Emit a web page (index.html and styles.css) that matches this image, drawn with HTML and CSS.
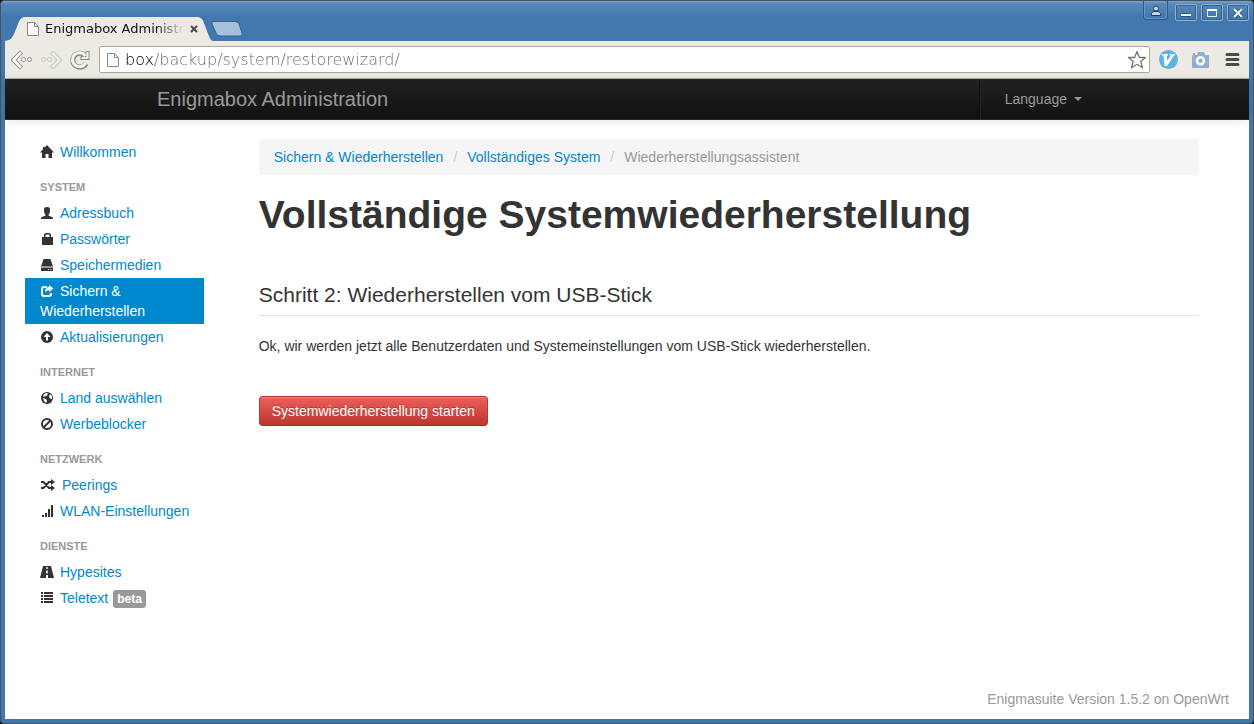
FILE: index.html
```html
<!DOCTYPE html>
<html lang="de">
<head>
<meta charset="utf-8">
<title>Enigmabox Administration</title>
<link rel="stylesheet" href="styles.css">
</head>
<body>
<div class="window">
  <header class="titlebar">
    <div class="tab">
      <svg class="tab-shape" viewBox="0 0 210 25" preserveAspectRatio="none" aria-hidden="true"><path d="M0 25C6 24 7 22 9 18L14 5Q16 0 20 0H194Q198 0 200 4L206 20Q208 25 210 25Z"/></svg>
      <svg class="page-icon" viewBox="0 0 12 14" aria-hidden="true"><path d="M.5.5h7l4 4v9H.5zM7.500.500v4h4"/></svg>
      <span class="tab-title">Enigmabox Administr</span>
      <button class="tab-close" aria-label="Tab schließen"><svg width="8" height="8" viewBox="0 0 8 8"><path d="M1 1l6 6M7 1L1 7" stroke="#4a4a4a" stroke-width="2"/></svg></button>
    </div>
    <button class="new-tab" aria-label="Neuer Tab"><svg width="32" height="16" viewBox="0 0 32 16"><path d="M3 .5H24Q27 .5 28 3L31 12Q32 15 29 15H9Q6 15 5 12L1 3Q0 .5 3 .5Z" fill="#a3c0dc" stroke="#37618d"/></svg></button>
    <div class="win-buttons">
      <button class="win-btn user" aria-label="Benutzer"><svg width="12" height="12" viewBox="0 0 12 12"><circle cx="6" cy="3.500" r="2.500" fill="#c5d8ea" stroke="#213c59"/><path d="M1.500 10.500V8.500Q2 7 4 6.500H8Q10 7 10.500 8.500V10.500Z" fill="#c5d8ea" stroke="#213c59"/></svg></button>
      <button class="win-btn" aria-label="Minimieren"><svg width="12" height="12" viewBox="0 0 12 12"><path d="M1 8h10" stroke="#2b5680" stroke-width="4"/><path d="M1 8h10" stroke="#fff" stroke-width="2"/></svg></button>
      <button class="win-btn" aria-label="Maximieren"><svg width="12" height="12" viewBox="0 0 12 12"><path d="M1.500 2.500h9v7h-9z" fill="none" stroke="#e9f1f8"/><path d="M1 3h10" stroke="#fff" stroke-width="2"/></svg></button>
      <button class="win-btn" aria-label="Schließen"><svg width="12" height="12" viewBox="0 0 12 12"><path d="M2 2l8 8M10 2L2 10" stroke="#2b5680" stroke-width="3.500"/><path d="M2 2l8 8M10 2L2 10" stroke="#fff" stroke-width="1.800"/></svg></button>
    </div>
  </header>

  <div class="toolbar">
    <button class="tool back" aria-label="Zurück"><svg width="22" height="22" viewBox="0 0 22 22"><path d="M10.500 3L2.500 11l8 8" fill="none" stroke="#8b8b88" stroke-width="4.500"/><path d="M10 3.500L2.500 11l7.500 7.500" fill="none" stroke="#fafaf8" stroke-width="2.500"/><g fill="#fff" stroke="#8b8b88"><circle cx="12.500" cy="10.500" r="2"/><circle cx="18.500" cy="10.500" r="2"/></g></svg></button>
    <button class="tool forward" aria-label="Vor"><svg width="22" height="22" viewBox="0 0 22 22"><path d="M11.500 3l8 8-8 8" fill="none" stroke="#c5c3be" stroke-width="4.500"/><path d="M12 3.500l7.500 7.500-7.500 7.500" fill="none" stroke="#efede7" stroke-width="2.500"/><g fill="#f1efea" stroke="#c5c3be"><circle cx="3.500" cy="10.500" r="2"/><circle cx="9.500" cy="10.500" r="2"/></g></svg></button>
    <button class="tool reload" aria-label="Neu laden"><svg width="22" height="22" viewBox="0 0 22 22"><g fill="none" stroke="#8b8b88" stroke-width="5"><path d="M16 6.500A7 7 0 1 0 17 14.500"/><path d="M18.500 2v7H11.500" stroke-width="4"/></g><g fill="none" stroke="#f5f5f2" stroke-width="3"><path d="M16.500 7A7 7 0 1 0 16.700 14"/><path d="M18.500 3v6H12.500" stroke-width="2"/></g></svg></button>
    <div class="address">
      <svg class="page-icon" viewBox="0 0 12 14" aria-hidden="true"><path d="M.5.5h7l4 4v9H.5zM7.500.500v4h4"/></svg>
      <input class="url" type="text" aria-label="Adresse" value="box/backup/system/restorewizard/">
      <button class="tool" aria-label="Lesezeichen"><svg width="20" height="20" viewBox="0 0 20 20"><path d="M10 1.500l2.400 6H18.500l-4.700 4 1.700 6.300L10 14.300l-5.500 3.500 1.700-6.300-4.700-4H7.600z" fill="#fff" stroke="#777" stroke-width="1.300" stroke-linejoin="round"/></svg></button>
    </div>
    <button class="tool" aria-label="Vimium"><svg width="20" height="20" viewBox="0 0 20 20"><circle cx="10.500" cy="9.500" r="9.500" fill="#5fb0e4"/><path d="M4 4H10V5.500H9V11L13 5.500H12V4H17V5.500H16L9 16H6.500L5.500 5.500H4z" fill="#fff"/></svg></button>
    <button class="tool" aria-label="Bildschirmfoto"><svg width="20" height="20" viewBox="0 0 20 20"><path d="M3 5V3h2v2h2L8 2h6l1 3h3q1 0 1 1v11q0 1-1 1H3q-1 0-1-1V6q0-1 1-1z" fill="#91afd3"/><circle cx="10.500" cy="10.800" r="3.500" fill="#91afd3" stroke="#fff" stroke-width="2.500"/></svg></button>
    <button class="tool" aria-label="Menü"><svg width="20" height="20" viewBox="0 0 20 20"><path d="M5 4.500h11M5 9.500h11M5 14.500h11" stroke="#4b4b4b" stroke-width="3" stroke-linecap="round"/></svg></button>
  </div>

  <div class="page">
    <nav class="navbar">
      <div class="navbar-inner">
        <a class="brand" href="#">Enigmabox Administration</a>
        <button class="language">Language <span class="caret"></span></button>
      </div>
    </nav>

    <div class="columns">
      <nav class="sidebar">
        <a class="item" href="#"><svg class="icon" viewBox="0 0 14 14"><path d="M7 0L14 7.500H12V13H8.500V9H5.500V13H2V7.500H0L3 4.300V2H5V2.200z"/></svg>Willkommen</a>
        <h2 class="group">System</h2>
        <a class="item" href="#"><svg class="icon" viewBox="0 0 14 14"><path d="M4 3Q4 1 7 1T10 3V5.500Q9.500 8 8.500 8.500V9.500L13 11.500V13H1V11.500L5.500 9.500V8.500Q4.500 8 4 5.500z"/></svg>Adressbuch</a>
        <a class="item" href="#"><svg class="icon" viewBox="0 0 14 14"><path fill-rule="evenodd" d="M2 5H4V3Q4 1 6 1H9Q11 1 11 3V5H13V13H2zM5.500 5H9.500V3.500Q9.500 2.500 8.500 2.500H6.500Q5.500 2.500 5.500 3.500z"/></svg>Passwörter</a>
        <a class="item" href="#"><svg class="icon" viewBox="0 0 14 14"><path d="M3.500 1H10.500L13 8.500H1z"/><path fill-rule="evenodd" d="M1 9.500H13V13H1zM8 11v1h1v-1zM10.500 11v1h1v-1z"/></svg>Speichermedien</a>
        <a class="item active" href="#"><svg class="icon" viewBox="0 0 14 14"><path d="M7 3H4Q2 3 2 5V10Q2 12 4 12H9Q11 12 11 10V9" fill="none" stroke="#fff" stroke-width="2"/><path d="M9 1L13.500 4.500 9 8V6Q6 6 5 8.500Q5 3.500 9 3z"/></svg>Sichern &amp; Wiederherstellen</a>
        <a class="item" href="#"><svg class="icon" viewBox="0 0 14 14"><circle cx="7" cy="7" r="6"/><path d="M7 3L10.500 7H8V10.500H6V7H3.500z" fill="#fff"/></svg>Aktualisierungen</a>
        <h2 class="group">Internet</h2>
        <a class="item" href="#"><svg class="icon" viewBox="0 0 14 14"><circle cx="7" cy="7" r="6"/><path d="M6 2L8 2.500 7 4.500 5 5.500 3 5.500 4 3zM10 3L12 5V8L10 7.500 9 5.500zM3 7L6 8 7 10 6 12 4 10z" fill="#fff"/></svg>Land auswählen</a>
        <a class="item" href="#"><svg class="icon" viewBox="0 0 14 14"><circle cx="7" cy="7" r="5" fill="none" stroke="#333" stroke-width="2"/><path d="M3.500 10.500l7-7" stroke="#333" stroke-width="2"/></svg>Werbeblocker</a>
        <h2 class="group">Netzwerk</h2>
        <a class="item" href="#"><svg class="icon wide" viewBox="0 0 16 14"><path d="M1 4H3.500L9 10H12M1 10H3.500L9 4H12" fill="none" stroke="#333" stroke-width="2"/><path d="M11 1l4 3-4 3zM11 7l4 3-4 3z"/></svg>Peerings</a>
        <a class="item" href="#"><svg class="icon" viewBox="0 0 14 14"><path d="M2 11h2v2H2zM5 9h2v4H5zM8 5h2v8H8zM11 1h2v12H11z"/></svg>WLAN-Einstellungen</a>
        <h2 class="group">Dienste</h2>
        <a class="item" href="#"><svg class="icon" viewBox="0 0 14 14"><path fill-rule="evenodd" d="M3 1H11L14 13H8V10H6V13H0zM6.300 2V4H7.700V2zM6.200 5.500V8.500H7.800V5.500z"/></svg>Hypesites</a>
        <a class="item" href="#"><svg class="icon" viewBox="0 0 14 14"><path d="M1 1h2v2H1zM4 1h9v2H4zM1 4h2v2H1zM4 4h9v2H4zM1 7h2v2H1zM4 7h9v2H4zM1 10h2v2H1zM4 10h9v2H4z"/></svg>Teletext <span class="badge">beta</span></a>
      </nav>

      <main class="content">
        <ol class="breadcrumb">
          <li><a href="#">Sichern &amp; Wiederherstellen</a></li>
          <li><a href="#">Vollständiges System</a></li>
          <li>Wiederherstellungsassistent</li>
        </ol>
        <h1 class="title">Vollständige Systemwiederherstellung</h1>
        <h2 class="step">Schritt 2: Wiederherstellen vom USB-Stick</h2>
        <p class="text">Ok, wir werden jetzt alle Benutzerdaten und Systemeinstellungen vom USB-Stick wiederherstellen.</p>
        <button class="danger">Systemwiederherstellung starten</button>
      </main>
    </div>
    <footer class="footer">Enigmasuite Version 1.5.2 on OpenWrt</footer>
  </div>
</div>
</body>
</html>
```
FILE: styles.css
```css
* { box-sizing: border-box; }
body {
  margin: 0;
  background: #111;
  color: #333;
  font: 14px/20px "Liberation Sans", Arial, sans-serif;
}
button { border: 0; padding: 0; background: none; font: inherit; color: inherit; }
a { color: #0088cc; text-decoration: none; }
svg { display: block; flex: none; }

.window {
  display: flex;
  flex-direction: column;
  min-height: 100vh;
  padding: 0 4px 4px;
  border: 1px solid #48525d;
  border-radius: 4px;
  background: #4178ae;
}

/* Window frame */
.titlebar {
  display: flex;
  height: 40px;
  margin: 0 -4px;
  padding: 0 4px;
  background: linear-gradient(#7ba1cb 0, #5688bd 3px, #4278ae 16px, #4178ae);
  border-radius: 4px 4px 0 0;
}
.tab {
  position: relative;
  display: flex;
  align-items: center;
  align-self: flex-end;
  width: 208px;
  height: 24px;
  padding: 0 15px 0 22px;
  gap: 6px;
}
.tab-shape { position: absolute; inset: 0; width: 100%; height: 100%; fill: #edeae3; }
.tab > :not(.tab-shape) { position: relative; }
.page-icon { width: 12px; height: 14px; fill: #fafafa; stroke: #8a8a88; }
.tab-title {
  flex: 1;
  color: #111;
  font: 13px/20px "DejaVu Sans", sans-serif;
  white-space: nowrap;
  mask-image: linear-gradient(90deg, #000 80%, transparent);
}
.new-tab { align-self: flex-end; margin: 0 0 4px -2px; }
.win-buttons { display: flex; gap: 4px; margin-left: auto; }
.win-btn {
  display: grid;
  place-items: center;
  width: 22px;
  height: 17px;
  margin-top: 3px;
  border: 1px solid #8fb0d1;
  border-radius: 2px;
  outline: 1px solid #36648f;
  outline-offset: -2px;
}
.win-btn.user {
  width: 25px;
  height: 19px;
  margin: 0 3px 0 0;
  padding-top: 2px;
  border-color: #2c5885;
  border-top: 0;
  border-radius: 0 0 4px 4px;
  outline-color: #6b95bf;
}
.toolbar {
  display: flex;
  align-items: center;
  height: 38px;
  padding: 0 7px 0 6px;
  gap: 12px;
  background: #edeae3;
  border-bottom: 1px solid #b0ada8;
}
.tool.back, .tool.forward { margin-right: -5px; }
.tool.reload { margin-right: -4px; }
.address {
  display: flex;
  flex: 1;
  align-items: center;
  height: 27px;
  margin-right: -4px;
  padding: 0 2px 0 7px;
  gap: 6px;
  border: 1px solid #aaa7a1;
  border-radius: 2px;
  background: #fff;
}
.url {
  flex: 1;
  min-width: 0;
  height: 24px;
  padding: 0;
  border: 0;
  outline: 0;
  color: #666;
  background: linear-gradient(90deg, #000 30px, #666 30px) text;
  -webkit-text-fill-color: transparent;
  font: 200 16px/24px "DejaVu Sans", sans-serif;
}

/* Page */
.page { display: flex; flex: 1; flex-direction: column; background: #fff; }
.navbar {
  border-bottom: 1px solid #252525;
  background: linear-gradient(#222, #111);
  box-shadow: 0 1px 10px rgba(0, 0, 0, .1);
}
.navbar-inner {
  display: flex;
  justify-content: space-between;
  max-width: 940px;
  height: 40px;
  margin: 0 auto;
  color: #999;
}
.brand { color: #999; font-size: 20px; line-height: 40px; }
.language {
  display: flex;
  align-items: center;
  gap: 7px;
  padding: 0 15px 0 25px;
  border-left: 1px solid #111;
  box-shadow: inset 1px 0 0 #222;
}
.caret { border: 4px solid transparent; border-top-color: #999; border-bottom: 0; }
.columns { display: flex; gap: 2%; padding: 19px 20px; }
.sidebar { flex: 0 0 14.9%; }
.item { display: block; padding: 3px 15px; }
.item.active { background: #0088cc; color: #fff; }
.icon {
  display: inline-block;
  width: 14px;
  height: 14px;
  margin-right: 6px;
  fill: #333;
  vertical-align: -2px;
}
.icon.wide { width: 16px; }
.active .icon { fill: #fff; }
.group {
  margin: 9px 0 0;
  padding: 3px 15px;
  color: #999;
  font-size: 11px;
  line-height: 20px;
  text-transform: uppercase;
}
.badge {
  margin-left: 1px;
  padding: 2px 4px;
  border-radius: 3px;
  background: #999;
  color: #fff;
  font-size: 12px;
  font-weight: bold;
  line-height: 14px;
}
.content { flex: 1; max-width: 940px; margin: 0 auto; }
.breadcrumb {
  display: flex;
  margin: 0 0 20px;
  padding: 8px 15px;
  border-radius: 4px;
  background: #f5f5f5;
  color: #999;
  list-style: none;
}
.breadcrumb li + li::before { content: "/"; padding: 0 10px; color: #ccc; }
.title { margin: 0 0 40px; font-size: 39px; line-height: 40px; }
.step {
  margin: 0 0 20px;
  border-bottom: 1px solid #e5e5e5;
  font-size: 21px;
  font-weight: normal;
  line-height: 40px;
}
.text { margin: 0 0 40px; }
.danger {
  padding: 4px 12px;
  border: 1px solid #bd362f;
  border-bottom-color: #a52a25;
  border-radius: 4px;
  background: linear-gradient(#ee5f5b, #bd362f);
  box-shadow: inset 0 1px 0 rgba(255, 255, 255, .2);
  color: #fff;
  text-shadow: 0 -1px 0 rgba(0, 0, 0, .25);
}
.footer { margin-top: auto; padding: 10px 20px; color: #999; text-align: right; }
```
